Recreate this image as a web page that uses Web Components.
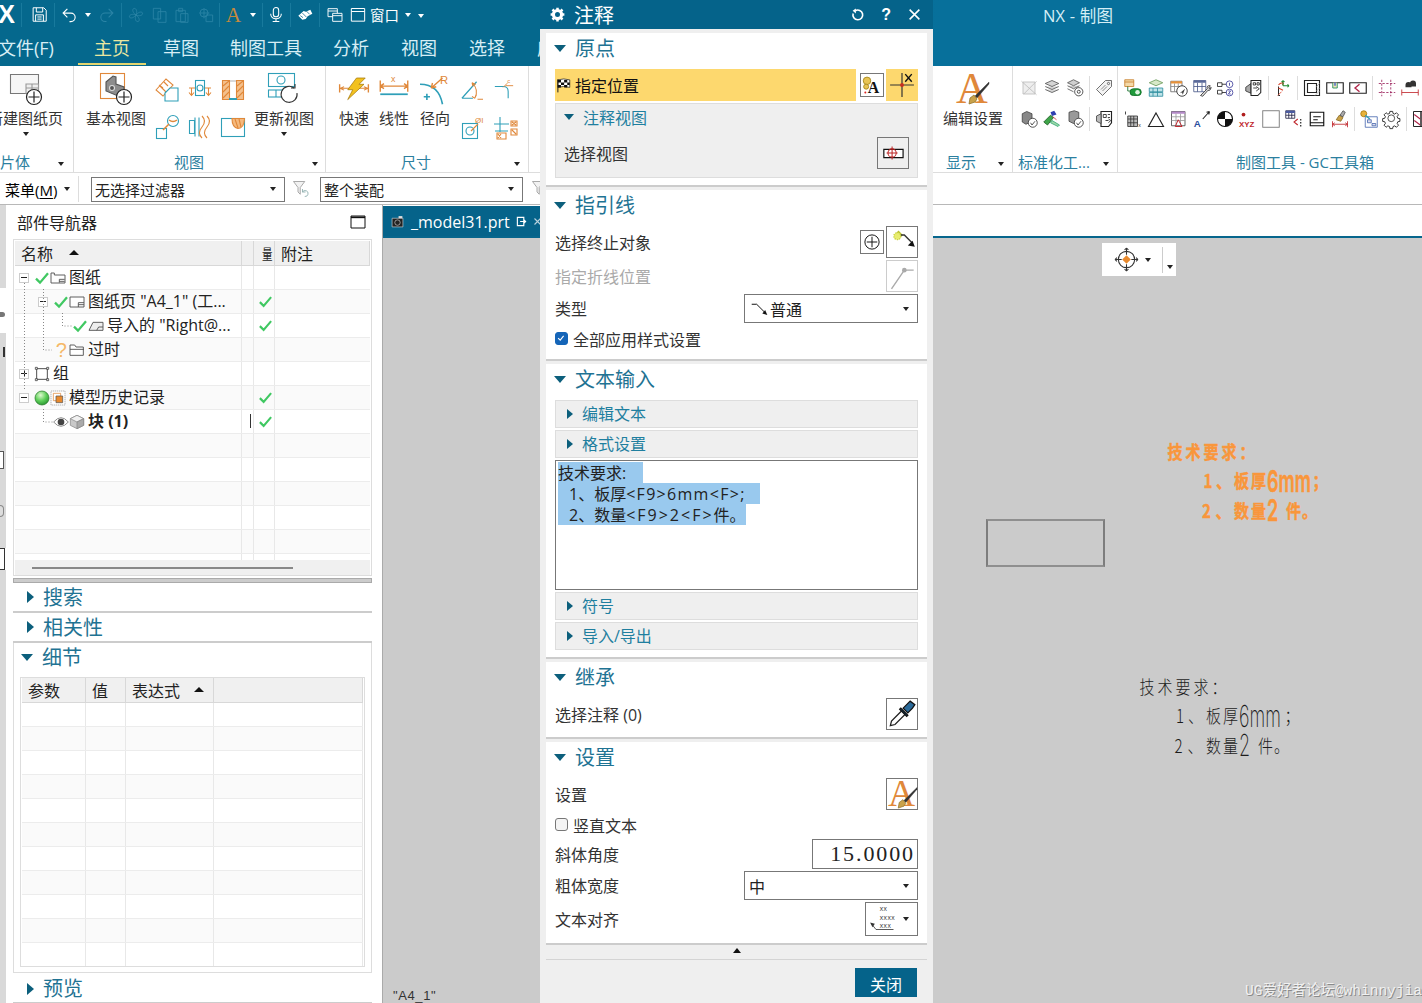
<!DOCTYPE html>
<html lang="zh"><head><meta charset="utf-8"><title>NX - 制图</title>
<style>html,body{margin:0;padding:0;background:#fff}body{width:1422px;height:1003px;overflow:hidden;font-family:"Open Sans","Noto Sans CJK SC",sans-serif}</style>
</head><body>
<nx-app></nx-app>
<script>
const O='#e0883a',T='#2f9fb8',K='#333',M='#777',F='#2b84a6',W='#fff';
const t=(x,y,s,c,fs,extra='')=>`<text x="${x}" y="${y}" fill="${c}" stroke="none" font-size="${fs}" font-family="Liberation Sans" ${extra}>${s}</text>`;
const ts=(x,y,s,c,fs,extra='')=>`<text x="${x}" y="${y}" fill="${c}" stroke="none" font-size="${fs}" font-family="Liberation Serif" ${extra}>${s}</text>`;
const tm=(x,y,s,c,fs)=>`<text x="${x}" y="${y}" fill="${c}" stroke="none" font-size="${fs}" font-family="Liberation Mono">${s}</text>`;
const plusC=(x,y,r)=>`<circle cx="${x}" cy="${y}" r="${r}" fill="#fff" stroke="#222" stroke-width="1.200"/><path stroke="#222" stroke-width="1.200" d="M${x} ${y-r+2}v${2*r-4}M${x-r+2} ${y}h${2*r-4}"/>`;
const brush=`<path d="M32 9L18 23l2 2L32 11z" fill="#333" stroke="#333" stroke-width=".4"/><path d="M13 25l4-3 3 4-2 3-6 2z" fill="#c9a24a" stroke="#8a6a20" stroke-width=".7"/>`;
const I={
save:`<g stroke="#fff" stroke-width="1.400"><path d="M3 2.500h15l3.500 3.500v15.500H3zM7.500 2.500v6h9v-6M6.500 21.500v-9h11v9M9 15.500h6M9 18.500h6"/></g>`,
undo:`<path stroke="#fff" stroke-width="1.600" d="M9 4L3 10l6 6M3 10h11a6 6 0 0 1 0 12h-2"/>`,
redo:`<path stroke="${F}" stroke-width="1.500" d="M15 4l6 6-6 6M21 10H10a6 6 0 0 0 0 12h2"/>`,
fan:`<path stroke="${F}" stroke-width="1.300" d="M12 12C8 9 5 4 9 2c4 0 5 5 3 10zM12 12c4 3 7 8 3 10-4 0-5-5-3-10zM12 12c-3 4-8 6-10 3 0-4 5-5 10-3zM12 12c3-4 8-6 10-3 0 4-5 5-10 3z"/>`,
copy:`<path stroke="${F}" stroke-width="1.300" d="M2 2h11v16H2zM9 7h12v16H9z"/>`,
paste:`<path stroke="${F}" stroke-width="1.300" d="M3 5h14v17H3zM7 2h6v5H7zM10 10h11v13H10z"/>`,
move:`<path stroke="${F}" stroke-width="1.300" d="M9 2v15M2 9h15"/><circle cx="9" cy="9" r="6" stroke="${F}" stroke-width="1.300"/><path stroke="${F}" stroke-width="1.300" d="M12 12h10v10H12z"/>`,
fontA:ts(1,22,'A','#c48a3e',30),
mic:`<rect x="8" y="1.500" width="8" height="14" rx="4" stroke="#fff" stroke-width="1.600"/><path stroke="#fff" stroke-width="1.600" d="M4 11c0 10 16 10 16 0M12 18v4M7 22.500h10"/>`,
hand:`<path fill="#fff" d="M2 13l8-7 3 1 7-3 3 6-7 4-3 4-5 1z"/><path stroke="#08668c" d="M8 9l6 6M14 6l5 5M5 13l4 3"/>`,
win1:`<path fill="#06688f" stroke="#fff" stroke-width="1.400" d="M1.500 2.500h14v12h-14zM1.500 6h14"/><path fill="#06688f" stroke="#fff" stroke-width="1.400" d="M8.500 9.500h14v12h-14zM8.500 13h14"/>`,
win2:`<path stroke="#fff" stroke-width="1.500" d="M2 3h20v19H2zM2 7.500h20"/>`,
'@newsheet':`<path fill="#f6f6f6" stroke="#777" d="M.5 1.500h28v19H.5z"/><path fill="#eee" stroke="#999" d="M16 11h12.500v9.500H16zM16 15h12.500M22 11v9.500"/>`+plusC(24,24,7.5),
'@baseview':`<rect x=".5" y=".5" width="24" height="25" stroke="${O}" fill="#fff"/><path fill="#8d8d8d" stroke="#555" d="M6 9l7-6 3 1v7l8 3v6l-6 3-12-5z"/><circle cx="12" cy="15" r="2.500" fill="#555" stroke="#ddd"/>`+plusC(24,24,7.5),
'@update':`<g stroke="${T}"><rect x=".5" y=".5" width="26" height="13"/><circle cx="13" cy="7" r="4"/><rect x=".5" y="17" width="26" height="7"/><path d="M8 17v7"/></g><path fill="#fff" stroke="#333" d="M29 20a8 8 0 1 1-3-5"/><path stroke="#333" fill="none" d="M23 15h4v-4"/>`,
v1:`<path stroke="${O}" fill="#fff" d="M1 12L11 1l7 6-10 11zM5 8l6 6M9 4l4 4M4 7l4 3"/><path stroke="${T}" fill="#fff" d="M10 15l5-5h8v13H10z"/>`,
v2:`<g stroke="${T}"><rect x="7.500" y="2.500" width="9" height="15"/><circle cx="12" cy="10" r="3"/></g><path stroke="${O}" d="M1 10h6M3.500 10v7M1 14.500l2.500 3 2.500-3M17 10h6M20.500 10v7M18 14.500l2.500 3 2.500-3"/>`,
v3:`<path fill="#f4c08c" stroke="${O}" d="M1.500 2.500h7v19h-7zM15.500 2.500h7v19h-7z"/><path stroke="${O}" d="M2 8l6-5M2 14l6-6M2 20l6-6M16 8l6-5M16 14l6-6M16 20l6-6"/><path stroke="${T}" stroke-width="2" d="M8 21h8"/><path stroke="#bbb" d="M9 3h6"/>`,
v4:`<rect x="1.500" y="13.500" width="10" height="10" stroke="${T}"/><circle cx="18" cy="6" r="5.500" stroke="${T}"/><path stroke="${O}" stroke-width="1.500" d="M8 15l6-6M14 5q4 3 8 0"/>`,
v5:`<path stroke="${T}" d="M1.500 5.500h5v13h-5zM7 2.500v19M11 2.500v19"/><path stroke="${O}" d="M14 1q5 5 0 11t0 11M19 1q5 5 0 11t0 11"/>`,
v6:`<rect x=".5" y="3.500" width="23" height="18" stroke="${T}"/><path d="M11 3.500q0 9 6 10 6 0 6.500-10z" fill="#f4b97e" stroke="${O}"/><path stroke="${O}" d="M14 4l3 9M18 4l2 8"/>`,
quick:`<g transform="translate(0 4) scale(1 .72)"><path stroke="${O}" d="M.5 7v9M23.500 7v9M1 11.500h22M1 11.500l3-2M1 11.500l3 2M23 11.500l-3-2M23 11.500l-3 2"/><path fill="#f2c11e" stroke="#a5780a" stroke-width=".7" d="M14 0h7l-5 7h4L7 24l4-11H7z"/></g>`,
linear:`<g transform="translate(0 4)"><path stroke="${O}" d="M1 2v9M23 2v9M1 6.500h22M1 6.500l3-2M1 6.500l3 2M23 6.500l-3-2M23 6.500l-3 2"/><path stroke="${T}" stroke-width="1.400" d="M1 13h22"/>`+t(9.5,3.500,'x',O,7)+`</g>`,
radial:`<path stroke="${T}" stroke-width="1.300" d="M0 9q15 0 18 16M3 19h5M5.500 16.500v5"/><path stroke="${O}" d="M9 12l9-8M9 12l1-4M9 12l4-1"/>`+t(16,9,'R',O,9),
angle:`<path stroke="${T}" stroke-width="1.300" d="M1 21h12M1 21L17 3"/><path stroke="${O}" d="M12 4q8 8 3 17M12 4l1 4M12 4l4 2M15 21l-3-2M15 21l2-4M18 22h6"/>`,
chamfer:`<path stroke="${T}" stroke-width="1.300" d="M1 9h10q6 0 6 6v8"/><path stroke="${O}" d="M11 10l5-5M14 8h9"/>`+t(16,5,'c',O,7),
hole:`<rect x="1.500" y="7.500" width="15" height="15" stroke="${T}"/><circle cx="9" cy="15" r="4" stroke="${T}"/><path stroke="${O}" d="M10 15l7-7"/>`+t(14,7,'ØI',O,8),
feat:`<path stroke="${T}" d="M6 1v15M0 8h15M1 15h13"/><path stroke="${O}" d="M17 5h6v5h-6zM3 17h9v6H3zM18 6l4 3M22 6l-4 3M4 18l3 4M7 18l-3 4M17 13h6v6h-6zM18 14l4 4"/>`,
'@editA':ts(-1,30,'A',O,44)+brush,
s1:`<path stroke="#bbb" fill="#eee" d="M4 4h16v16H4zM2 3l20 18M22 3L5 20"/>`,
s2:`<path fill="#d5d5d5" stroke="#555" d="M12 2l9 4-9 4-9-4zM3 10l9 4 9-4M3 14l9 4 9-4"/>`,
s3:`<path fill="#cfcfcf" stroke="#555" d="M10 1l8 4-8 4-8-4zM2 9l8 4 8-4M2 13l8 4"/><circle cx="17" cy="17" r="5.500" fill="#fff" stroke="#333"/><circle cx="17" cy="17" r="2" stroke="#333"/>`,
s4:`<path fill="#f3f3f3" stroke="#555" d="M14 2h8v8L10 22 2 14z"/><path stroke="#777" d="M8 14l6-6M10 16l6-6"/><circle cx="18" cy="6" r="1.500" stroke="#555"/>`,
s5:`<path fill="#888" stroke="#444" d="M3 5l6-3 7 3v10l-8 4-5-3z"/><circle cx="17" cy="17" r="6" fill="#fff" stroke="#333"/><path stroke="#333" d="M14 17l2 3 4-5"/>`,
s6:`<path fill="#3fa54a" stroke="#1d5e25" d="M1 16l9-9 4 3-8 10z"/><path fill="#2f3fb0" d="M10 3l5-2 3 5-6 2z"/><path stroke="#c34" d="M13 9l5 4"/><path fill="#9fd7a8" stroke="#3a7" d="M12 14l10 6-2 2-10-5z"/>`,
s7:`<path fill="#999" stroke="#444" d="M4 3l7-2 6 2v12l-7 3-6-3z"/><circle cx="17" cy="17" r="6" fill="#fff" stroke="#333"/><path stroke="#333" d="M14 17l2 3 4-5"/>`,
s8:`<path fill="#fff" stroke="#222" stroke-width="1.500" d="M8 2h14v15l-4 5H8z"/><path fill="#bbb" stroke="#444" d="M2 8l6-3v13l-6-3z"/><path stroke="#222" d="M11 6h4v4h-4zM17 6h3M17 10h3M14 14h4M18 12l3 2-3 3"/>`,
g1:`<path fill="#f4d9a8" stroke="#c87f2a" d="M1 1h12v9H1z"/><path stroke="#c87f2a" d="M1 4h12"/><rect x="8" y="13" width="15" height="9" rx="4.500" fill="#1f9a3b" stroke="#0c6a22"/><circle cx="18" cy="17.500" r="3" fill="#dff5e2"/><path stroke="#0c6a22" d="M5 10v6h3"/>`,
g2:`<path fill="#bfe3e8" stroke="#2f8fa0" d="M3 18h18v5H3zM3 12h18v5H3z"/><path stroke="#2f8fa0" d="M8 12v11M14 12v11"/><path fill="#d7e8c7" stroke="#6a9a5a" d="M12 1l9 4-9 4-9-4z"/>`,
g3:`<path fill="#fff" stroke="#666" d="M1 3h15v14H1z"/><path fill="#e8923a" d="M1 3h15v3H1z"/><path stroke="#888" d="M1 10h15M6 6v11M11 6v11"/><circle cx="16" cy="16" r="7" fill="#fff" stroke="#222"/><path fill="#444" d="M13 19l7-6-3 8-1-3z"/>`,
g4:`<path fill="#fff" stroke="#4a5a8a" d="M1 2h16v15H1z"/><path fill="#5a6a9a" d="M1 2h16v3H1z"/><path stroke="#4a5a8a" d="M1 10h16M6 5v12M12 5v12"/><path fill="#ddd" stroke="#333" d="M10 22l9-9c-1-3 1-5 4-4l-2 3 2 1 1-2c0 3-2 5-4 4l-7 8z"/>`,
g5:`<path stroke="#222" d="M2 5h6v5H2zM2 15h6v5H2zM8 7h6M8 18h6"/><circle cx="18" cy="7" r="4.500" stroke="#3b3b9a"/><circle cx="18" cy="18" r="4.500" stroke="#3b3b9a"/><path stroke="#3b3b9a" d="M18 5v4M16.500 16h3l-3 4h3"/>`,
g6:`<path fill="#aaa" stroke="#333" d="M1 11l7-5v13l-7-3z"/><path fill="#fff" stroke="#222" stroke-width="1.400" d="M8 2h13v16l-4 4H8z"/><path stroke="#222" d="M11 5h3v3h-3zM16 5h3v3h-3zM11 12h5M15 10l4 3-4 3"/>`,
g7:`<path stroke="#222" stroke-width="1.300" d="M6 22V10M6 22h2"/><path stroke="#d8442c" stroke-width="1.400" d="M6 8q3-4 7-2M13 6l-2-2M13 6l-2 2M6 12l6 3"/><path stroke="#1e8a2e" stroke-width="1.400" d="M12 9v-7M12 2l-2 2M12 2l2 2M12 9h8M20 9l-2-2M20 9l-2 2"/><path stroke="#d8442c" d="M5 22l5-5"/>`,
g8:`<path fill="#fff" stroke="#222" stroke-width="1.500" d="M2 2h20v20H2z"/><path fill="#fff" stroke="#222" stroke-width="1.500" d="M6 6h12v12H6z"/><path stroke="#aaa" d="M18 10l4-4M18 16l4-4M16 22l6-6"/>`,
g9:`<path stroke="#222" stroke-width="1.500" d="M1 5h22v14H1z"/><path fill="#f2e6ba" stroke="#1a8a5a" d="M9 5v7h6V5"/><path fill="#4a6aca" d="M11 5h2v4h-2z"/>`,
g10:`<path stroke="#222" stroke-width="1.500" d="M1 5h22v14H1z"/><path stroke="#b0264a" stroke-width="1.800" d="M14 7l-6 5 6 5"/>`,
g11:`<path stroke="#9a1f5a" stroke-dasharray="3 2" d="M5 1v22M17 1v22M1 6h22M1 18h22"/>`,
g12:`<path stroke="#c0272d" d="M1 14v8M23 14v8M1 18h22"/><path fill="#333" d="M6 8a4 4 0 0 1 8 0v3H6zM12 6a4 4 0 0 1 8 0v4h-8z"/>`,
h1:`<path stroke="#222" d="M2 2v4"/><path fill="#bbb" stroke="#333" d="M5 8h13v14H5z"/><path stroke="#333" d="M9 8v14M13 8v14M5 12h13M5 17h13"/>`+t(19,23,'x','#333',7),
h2:`<path stroke="#222" stroke-width="1.500" d="M12 4l10 18H2z"/>`,
h3:`<path fill="#fff" stroke="#444" d="M2 2h18v19H2z"/><path fill="#b58ac8" d="M2 2h18v3H2z"/><path stroke="#999" d="M2 9h18M2 14h18M8 5v16M14 5v16"/><path stroke="#c0272d" stroke-width="1.300" d="M11 13l5 9H7z"/>`,
h4:`<path stroke="#222" stroke-width="1.400" d="M13 12l9-10M22 2l-4 1M22 2l-1 4"/>`+t(1,23,'A','#2a4f9e',13,'font-weight="bold"'),
h5:`<circle cx="12" cy="12" r="10" fill="#fff" stroke="#111" stroke-width="1.500"/><path fill="#111" d="M12 2a10 10 0 0 0-10 10h10zM12 12h10a10 10 0 0 1-10 10z"/>`,
h6:`<circle cx="6" cy="6" r="2.500" fill="#b01e1e"/>`+t(0,22,'XYZ','#c0272d',10.5,'font-weight="bold"'),
h7:`<rect x="1" y="1" width="22" height="22" stroke="#777" stroke-width="1.200"/>`,
h8:`<path fill="#fff" stroke="#224" d="M1 1h12v10H1z"/><path fill="#4a5aa0" d="M1 1h12v3H1z"/><path stroke="#224" d="M1 7h12M5 4v7M9 4v7"/><path stroke="#c0272d" stroke-width="1.400" d="M17 12l-5 4 5 4"/><path stroke="#111" stroke-width="1.500" stroke-dasharray="2 2" d="M21 12v10"/>`,
h9:`<path stroke="#111" stroke-width="1.500" d="M3 3h18v18H3zM7 9h10M7 13h6M3 17h18"/>`,
h10:`<path stroke="#c0272d" d="M2 15v8M22 15v8M2 19h20M2 19l3-2M2 19l3 2M22 19l-3-2M22 19l-3 2"/><path fill="#c9a24a" stroke="#8a6a20" d="M7 13l4-6 5 3-3 5z"/><path fill="#aaa" stroke="#555" d="M12 7l4-6 3 2-3 6z"/>`,
h11:`<path fill="#fff" stroke="#4a6ab0" d="M7 9h16v14H7z"/><path fill="#dde" stroke="#4a6ab0" d="M10 13h5v4h-5zM16 18h5v3h-5z"/><circle cx="5" cy="5" r="4" fill="#e8b23a" stroke="#a57810"/><path stroke="#2f9fb8" stroke-width="2" d="M7 7l6 5"/>`,
h12:`<path stroke="#333" stroke-width="1.400" d="M10 2h4l.5 3 2.500 1 2.500-2 3 3-2 2.500 1 2.500 3 .5v4l-3 .5-1 2.500 2 2.500-3 3-2.500-2-2.500 1-.5 3h-4l-.5-3-2.500-1-2.500 2-3-3 2-2.500-1-2.500-3-.5v-4l3-.5 1-2.500-2-2.500 3-3 2.500 2 2.500-1z" transform="scale(.92)"/><circle cx="11" cy="11" r="4.500" stroke="#333"/>`,
h13:`<path fill="#fff" stroke="#222" stroke-width="1.300" d="M2 2h10v20H2zM12 2h10v20H12z"/><path stroke="#b0264a" stroke-width="1.500" d="M3 6l8 6M3 14l8 6M13 6l8 6M13 14l8 6"/>`,
check:`<path stroke="#40c862" stroke-width="3.400" d="M3 13l6 6L21 5"/>`,
quest:t(4,23,'?','#f5b868',30),
tr1:`<path fill="#fff" stroke="#555" stroke-width="1.400" d="M1.500 4.500h5v3h16v12h-21z"/><path stroke="#555" stroke-width="1.400" d="M14 14h8M14 17h8M14 14v5"/>`,
tr2:`<path fill="#fff" stroke="#555" stroke-width="1.400" d="M1.500 4.500h21v15h-21z"/><path stroke="#555" stroke-width="1.400" d="M14 13h8.500M14 16h8.500M14 13v6.500"/>`,
tr3:`<path fill="#eee" stroke="#555" stroke-width="1.400" d="M1.500 18.500l6-12h15v12z"/><path stroke="#555" stroke-width="1.400" d="M13 18.500l3-5h6.500"/>`,
tr4:`<path fill="#fff" stroke="#555" stroke-width="1.400" d="M1.500 20V4.500h7l2 3h11V20zM1.500 11h21"/>`,
tr5:`<path stroke="#333" stroke-width="1.300" d="M4 4h16v16H4z"/><path fill="#fff" stroke="#333" d="M2 2h3v3H2zM19 2h3v3h-3zM2 19h3v3H2zM19 19h3v3h-3z"/>`,
tr6:`<defs><radialGradient id="bg" cx=".4" cy=".3" r=".8"><stop offset="0" stop-color="#dff9d0"/><stop offset=".5" stop-color="#5fd05a"/><stop offset="1" stop-color="#1d8a28"/></radialGradient></defs><circle cx="12" cy="12" r="10.500" fill="url(#bg)" stroke="#2a7a2a"/>`,
tr7:`<path fill="#fff" stroke="#999" stroke-dasharray="2 1" d="M1.500 1.500h21v21h-21z"/><path fill="#fff" stroke="#e0883a" d="M5 5h11v11H5z"/><path fill="#e8892c" stroke="#555" d="M9 9h10v10H9z"/>`,
tr8:`<path fill="#fff" stroke="#666" d="M1 12q11-13 22 0-11 13-22 0z"/><circle cx="12" cy="12" r="5" fill="#444"/>`,
tr9:`<path fill="#c9c9c9" stroke="#888" d="M12 2l10 5v10l-10 5-10-5V7z"/><path fill="#f2f2f2" stroke="#888" d="M12 2l10 5-10 5L2 7z"/><path fill="#aaa" stroke="#888" d="M12 12l10-5v10l-10 5z"/>`,
maxi:`<path stroke="#111" stroke-width="1.500" d="M1.500 3h21v18h-21z"/><path stroke="#111" stroke-width="2.500" d="M1.500 5h21"/>`,
filt:`<path stroke="#999" fill="#f2f2f2" d="M2 2h15l-6 8v9l-3-3v-6z"/><path stroke="#8aa" d="M17 22a4 4 0 1 0-3-6M14 12v4h4"/>`,
tab:`<path fill="#222" stroke="#ddd" d="M2 6h20v16H2z"/><circle cx="12" cy="14" r="5" stroke="#ddd"/><path fill="#ddd" d="M14 2h7v4h-7z"/>`,
tabp:`<path stroke="#fff" stroke-width="2.500" d="M3 3h14v18H3zM9 12h13M16 7l5 5-5 5"/>`,
tabx:`<path stroke="#b8d2dd" stroke-width="3" d="M4 4l16 16M20 4L4 20"/>`,
snap:`<circle cx="12" cy="12" r="8.500" stroke="#333"/><path stroke="#333" d="M12 0v7M12 17v7M0 12h7M17 12h7M12 0l-2 2M12 0l2 2M12 24l-2-2M12 24l2-2M0 12l2-2M0 12l2 2M24 12l-2-2M24 12l-2 2"/><path fill="#e8892c" d="M12 7.500l4.500 4.500-4.500 4.500L7.500 12z"/>`,
gear:`<circle cx="12" cy="12" r="6.500" stroke="#fff" stroke-width="5"/><path stroke="#fff" stroke-width="4" d="M12 1v4M12 19v4M1 12h4M19 12h4M4 4l3 3M17 17l3 3M20 4l-3 3M7 17l-3 3"/>`,
reset:`<path stroke="#fff" stroke-width="3" d="M8 5a9 9 0 1 1-4 5"/><path fill="#fff" d="M9 1v9L3 5z"/>`,
close:`<path stroke="#fff" stroke-width="2.800" d="M3 3l18 18M21 3L3 21"/>`,
flag:`<path fill="#fff" stroke="#111" d="M3 3q9-3 19 0v12q-10-3-19 0z"/><path fill="#111" d="M3 3h5v4H3zM13 3h5v4h-5zM8 7h5v4H8zM18 7h4v4h-4zM3 11h5v4H3zM13 11h5v4h-5z"/><path stroke="#111" stroke-width="1.500" d="M3 2v21"/>`,
aIcon:`<circle cx="6" cy="7" r="4.500" fill="#e8c454" stroke="#a88a20"/><circle cx="5" cy="14" r="3" fill="#e8c454" stroke="#a88a20"/><circle cx="4" cy="21" r="1.200" fill="#d22"/>`+ts(7,21,'A','#111',19,'font-weight="bold"'),
cross:`<path stroke="#333" d="M1 12h22M12 1v22"/><circle cx="12" cy="12" r="1.800" fill="#c9301e"/><path stroke="#111" stroke-width="1.300" d="M15 2l6 7M21 2l-6 7"/>`,
vselect:`<path stroke="#111" stroke-width="1.300" d="M2 8h21v9H2z" fill="#fff"/><circle cx="11" cy="12" r="4.500" stroke="#b22" /><path stroke="#b22" d="M11 5v14M5 12h12"/>`,
addp:`<circle cx="12" cy="12" r="9.500" stroke="#111" stroke-width="1.300"/><path stroke="#111" stroke-width="1.300" d="M12 5v14M5 12h14"/>`,
term:`<path d="M9 3l-3 3 3 3 3-3z" fill="#d8e04a" stroke="#b8c030"/><circle cx="8" cy="7" r="3" fill="#e8ec70" stroke="#c8d040" stroke-dasharray="1 1"/><path stroke="#333" stroke-width="1.200" d="M11 6h3l7 7"/><path fill="#111" d="M23 16l-6-1 4-4z"/>`,
kink:`<circle cx="14" cy="7" r="2" fill="#aaa"/><path stroke="#aaa" stroke-width="1.200" d="M3 23L14 7h8"/>`,
leader:`<path stroke="#111" stroke-width="1.400" d="M1 6h7l11 11"/><path fill="#111" d="M23 21l-7-2 4-5z"/>`,
drop:`<path fill="#fff" stroke="#222" d="M2 22l1-4 9-9 3 3-9 9z"/><path fill="#2a6a9a" stroke="#111" d="M13 7l3-3 3-3 4 3-2 3-4 4z"/><path fill="#0f3a5a" stroke="#111" d="M11 7l6 6-1 1-6-6z"/>`,
'@styleA':ts(1,29,'A',O,40)+brush,
align:tm(9,5.500,'xx',K,5.5)+tm(9,12.500,'xxxx',K,5.5)+tm(9,19.500,'xxx',K,5.5)+`<path stroke="#333" stroke-width=".7" d="M2 16l4 5h15"/><path fill="#333" d="M1 15l4 1-2 3z"/>`
};
const ic=(n,w=18,h=w,st='')=>`<nx-icon n="${n}" w="${w}" h="${h}" style="${st}"></nx-icon>`;
const FONT=`:host{font-family:"Open Sans","Noto Sans CJK SC",sans-serif}*{box-sizing:border-box}`;
function def(name,css,html){customElements.define(name,class extends HTMLElement{connectedCallback(){if(this.shadowRoot)return;const r=this.attachShadow({mode:'open'});r.innerHTML='<style>'+FONT+css+'</style>'+(typeof html==='function'?html(this):html)}})}
def('nx-icon',':host{display:inline-flex;flex:none;line-height:0}svg{display:block;overflow:visible}',e=>{const n=e.getAttribute('n'),big=I['@'+n];return `<svg xmlns="http://www.w3.org/2000/svg" width="${e.getAttribute('w')}" height="${e.getAttribute('h')}" viewBox="0 0 ${big?'32 32':'24 24'}" fill="none" stroke-width="1.100">${big||I[n]}</svg>`});
def('nx-caret',':host{display:inline-block;flex:none;width:0;height:0;border-left:3.500px solid transparent;border-right:3.500px solid transparent;border-top:4px solid var(--c,#222)}','');
def('nx-tri',':host{display:inline-block;flex:none;width:0;height:0}',e=>{const w=+e.getAttribute('w'),h=+e.getAttribute('h'),d=e.getAttribute('d');e.style.cssText=d==='r'?`border-left:${w}px solid #0c5f7c;border-top:${h/2}px solid transparent;border-bottom:${h/2}px solid transparent`:`border-top:${h}px solid #0c5f7c;border-left:${w/2}px solid transparent;border-right:${w/2}px solid transparent`;return ''});
def('nx-sep',':host{display:block;flex:none;width:1px;height:24px;background:var(--sc,#ddd)}','');

/* title bar */
def('nx-titlebar',`:host{display:flex;align-items:center;height:29px;background:linear-gradient(90deg,#05688d 0,#05688d 540px,#07709b 940px);color:#fff;position:relative;overflow:hidden;--sc:#187a9d;--c:#fff}
.x{font:bold 25px/29px "Liberation Sans";width:15px;margin-right:6px;overflow:hidden;flex:none;direction:rtl}
.win{font-size:14.500px;width:30px;flex:none;margin-left:4px;white-space:nowrap}
.nx{position:absolute;left:1043px;top:0;line-height:32px;font-size:16.500px;color:#d5eef5;letter-spacing:.2px}`,
`<span class="x">X</span><nx-sep></nx-sep>${ic('save',17,17,'margin-left:9px')}<nx-sep style="margin-left:6px"></nx-sep>${ic('undo',17,17,'margin-left:6px')}<nx-caret style="margin-left:7px"></nx-caret>${ic('redo',17,17,'margin-left:7px')}<nx-sep style="margin-left:6px"></nx-sep>${ic('fan',16,16,'margin-left:6px')}${ic('copy',16,16,'margin-left:8px')}${ic('paste',16,16,'margin-left:6px')}${ic('move',16,16,'margin-left:8px')}<nx-sep style="margin-left:5px"></nx-sep>${ic('fontA',17,20,'margin-left:5px')}<nx-caret style="margin-left:8px"></nx-caret><nx-sep style="margin-left:6px"></nx-sep>${ic('mic',16,17,'margin-left:5px')}<nx-sep style="margin-left:6px"></nx-sep>${ic('hand',16,16,'margin-left:6px')}<nx-sep style="margin-left:6px"></nx-sep>${ic('win1',16,16,'margin-left:7px')}${ic('win2',16,17,'margin-left:7px')}<span class="win">窗口</span><nx-caret style="margin-left:5px"></nx-caret><nx-caret style="margin-left:7px;margin-top:3px"></nx-caret><span class="nx">NX - 制图</span>`);

/* tabs */
def('nx-tabs',`:host{display:flex;height:37px;background:linear-gradient(90deg,#05688d 0,#05688d 540px,#07709b 940px);overflow:hidden}
span{flex:none;font-size:18px;line-height:38px;color:#d7eef5;white-space:nowrap;position:relative}
.a{color:#e9e7a0;padding:0 16px;margin:0 17px 0 0;height:36px;box-shadow:inset 0 -2px #e3d56f}
.f{margin-left:-2px;width:80px}`,
`<span class="f">文件(F)</span><span class="a">主页</span><span>草图</span><span style="margin-left:31px">制图工具</span><span style="margin-left:31px">分析</span><span style="margin-left:32px">视图</span><span style="margin-left:32px">选择</span><span style="margin-left:32px">应用</span>`);

/* ribbon */
def('nx-rgroup',`:host{display:flex;flex-direction:column;flex:none;height:107px;position:relative;border-right:1px solid #ddd;--c:#222}
.body{height:83px;display:flex}
.lab{flex:1;display:flex;align-items:flex-start;font-size:15px;line-height:20px;color:#2c7f9f;white-space:nowrap;padding-top:2px;margin-top:1px;height:20px}
nx-caret{margin:10px 0 0 auto}`,
e=>`<div class="body"><slot></slot></div><div class="lab" style="padding-left:${e.getAttribute('lp')}px;padding-right:${e.getAttribute('cp')}px"><span>${e.getAttribute('label')}</span>${e.hasAttribute('nocaret')?'':'<nx-caret></nx-caret>'}</div>`);
def('nx-big',`:host{display:flex;flex-direction:column;align-items:center;flex:none;padding-top:7px;font-size:15px;color:#333;--c:#222}
.i{height:33px}
span{line-height:20px;margin-top:2px;white-space:nowrap}
nx-caret{margin-top:4px}`,
e=>`<div class="i">${ic(e.getAttribute('icon'),e.getAttribute('s')||32)}</div><span>${e.getAttribute('text')}</span>${e.hasAttribute('caret')?'<nx-caret></nx-caret>':''}`);
def('nx-irow',`:host{display:flex;align-items:center;gap:var(--g,5px);height:18px}`,'<slot></slot>');
def('nx-ribbon',`:host{display:flex;height:107px;background:#fff;overflow:hidden;border-bottom:1px solid #ddd}
.v{display:grid;grid-template-columns:24px 24px 24px;column-gap:9px;row-gap:13px;padding-top:12px;height:83px;align-content:start;justify-items:center;margin-left:9px}
.col{display:flex;flex-direction:column;gap:13px;padding-top:13px}
.sm{display:grid;grid-template-columns:23px 23px;column-gap:10px;row-gap:15px;padding:13px 0 0 11px;align-content:start}`,
`<nx-rgroup style="width:74px" label="片体" lp="0" cp="9"><nx-big icon="newsheet" text="新建图纸页" caret style="margin-left:-12px"></nx-big></nx-rgroup>
<nx-rgroup style="width:252px" label="视图" lp="100" cp="7">
<nx-big icon="baseview" text="基本视图" style="margin-left:12px"></nx-big>
<div class="v">${['v1','v2','v3','v4','v5','v6'].map(n=>ic(n,24)).join('')}</div>
<nx-big icon="update" text="更新视图" caret style="margin-left:9px"></nx-big></nx-rgroup>
<nx-rgroup style="width:203px" label="尺寸" lp="75" cp="8">
<nx-big icon="quick" text="快速" s="30" style="margin-left:13px"></nx-big><nx-big icon="linear" text="线性" s="30" style="margin-left:10px"></nx-big><nx-big icon="radial" text="径向" s="30" style="margin-left:11px"></nx-big>
<div class="sm">${ic('angle',22)}${ic('chamfer',20)}${ic('hole',24)}${ic('feat',24)}</div></nx-rgroup>
<div style="width:405px;flex:none"></div>
<nx-rgroup style="width:79px;margin-left:0" label="显示" lp="12" cp="8"><nx-big icon="editA" text="编辑设置" style="margin-left:9px"></nx-big></nx-rgroup>
<nx-rgroup style="width:105px" label="标准化工..." lp="5" cp="8"><div class="col" style="padding-left:7px">
<nx-irow>${ic('s1')}${ic('s2')}${ic('s3')}<nx-sep></nx-sep>${ic('s4')}</nx-irow>
<nx-irow>${ic('s5')}${ic('s6')}${ic('s7')}<nx-sep></nx-sep>${ic('s8')}</nx-irow></div></nx-rgroup>
<nx-rgroup style="width:305px;border:0" label="制图工具 - GC工具箱" lp="118" cp="0" nocaret><div class="col" style="padding-left:6px">
<nx-irow>${ic('g1')}${ic('g2')}${ic('g3')}${ic('g4')}${ic('g5')}<nx-sep></nx-sep>${ic('g6')}<nx-sep></nx-sep>${ic('g7')}<nx-sep></nx-sep>${ic('g8')}${ic('g9')}${ic('g10')}<nx-sep></nx-sep>${ic('g11')}${ic('g12')}</nx-irow>
<nx-irow>${ic('h1')}${ic('h2')}${ic('h3')}${ic('h4')}${ic('h5')}${ic('h6')}${ic('h7')}${ic('h8')}${ic('h9')}${ic('h10')}<nx-sep></nx-sep>${ic('h11')}${ic('h12')}<nx-sep></nx-sep>${ic('h13')}</nx-irow></div></nx-rgroup>`);

/* select */
def('nx-select',`:host{display:flex;align-items:center;flex:none;border:1px solid #777;background:#fff;padding:0 8px 0 var(--pl,3px);font-size:16px;color:#222;--c:#222;white-space:nowrap}
.g{flex:1;display:flex;align-items:center;min-width:0}`,`<div class="g"><slot></slot></div><nx-caret></nx-caret>`);

/* selection bar */
def('nx-selbar',`:host{display:flex;align-items:center;height:32px;background:#fff;border-bottom:1px solid #b8b8b8;--c:#222;padding-top:1px;overflow:hidden}
.m{margin-left:5px;font-size:15px;width:54px;flex:none;white-space:nowrap}u{text-underline-offset:2px}`,
`<span class="m">菜单(<u>M</u>)</span><nx-caret style="margin-left:5px"></nx-caret><nx-sep style="margin-left:8px;height:26px"></nx-sep>
<nx-select style="width:194px;height:25px;margin-left:12px;font-size:15px">无选择过滤器</nx-select>${ic('filt',18,18,'margin-left:7px')}
<nx-select style="width:203px;height:25px;margin-left:10px;font-size:15px">整个装配</nx-select>${ic('filt',18,18,'margin-left:8px')}`);

/* left dock strip */
def('nx-dock',`:host{display:flex;flex-direction:column;width:7px;flex:none;background:#fff;overflow:hidden}
div{width:6px;background:#d9d9d9;flex:none;position:relative}
i{display:block;background:#666;width:5px;position:absolute;left:0}`,
`<div style="height:83px"></div><div style="height:45px;background:#fff"><i style="top:24px;height:5px;background:#777;border-radius:0 3px 3px 0"></i></div><div style="height:42px"><i style="top:14px;height:10px;width:1.500px;left:3px;background:#333"></i></div><div style="height:70px"></div><div style="height:50px"><i style="top:6px;height:18px;width:4px;background:#fff;border:1px solid #555;border-left:0"></i></div><div style="height:53px"><i style="top:10px;height:12px;width:4px;background:#ddd;border:1px solid #888;border-left:0;border-radius:0 6px 6px 0"></i></div><div style="height:22px;background:#fff;border:1px solid #333;border-left:0;width:5px"></div><div style="flex:1"></div>`);

/* tree */
def('nx-row',`:host{display:grid;grid-template-columns:227px 12px 21px 1fr;height:24px;border-bottom:1px solid #ececec;background:var(--bg,#fff);font-size:16px;color:#222}
.n{display:flex;align-items:center;white-space:nowrap;overflow:hidden;border-right:1px solid #e8e8e8;position:relative}
.b{border-right:1px solid #e8e8e8;position:relative}
.c{border-right:1px solid #e8e8e8;display:flex;align-items:center;justify-content:center;padding-left:3px}
.x{width:10px;height:10px;border:1px solid #ccc;background:#fff;flex:none;position:relative;margin-right:5px}
.x::before{content:"";position:absolute;left:1px;right:1px;top:3.500px;height:1px;background:#222}
.x.p::after{content:"";position:absolute;top:1px;bottom:1px;left:3.500px;width:1px;background:#222}
.t{margin-left:3px;padding-bottom:4px}
.bold{font-weight:700}
.bar{position:absolute;left:8px;top:4px;height:14px;width:1px;background:#333}`,
e=>{const g=n=>e.getAttribute(n);return `<div class="n" style="padding-left:${g('ind')}px">${g('x')?`<span class="x ${g('x')==='+'?'p':''}"></span>`:''}${g('s')?ic(g('s'),16):''}${g('i')?ic(g('i'),16):''}<span class="t ${e.hasAttribute('bold')?'bold':''}">${g('text')||''}</span></div><div class="b">${e.hasAttribute('bold')?'<span class="bar"></span>':''}</div><div class="c">${e.hasAttribute('ok')?ic('check',15):''}</div><div></div>`});
def('nx-th',`:host{display:grid;height:25px;background:#f0f0f0;border-bottom:1px solid #d8d8d8;font-size:16px;color:#222}
span{display:flex;align-items:center;border-right:1px solid #d8d8d8;padding-left:var(--thp,6px);white-space:nowrap;padding-bottom:1px;overflow:hidden}
small{display:inline-block;font-size:14px;transform:scaleX(.75);transform-origin:0 50%;margin-left:2px}
b{width:0;height:0;border:5px solid transparent;border-top:0;border-bottom:5px solid #111;display:inline-block}`,
e=>{e.style.gridTemplateColumns=e.getAttribute('c');return e.getAttribute('cells').split('|').map(x=>{const[a,m]=x.split('^');return `<span>${a}${m?`<b style="margin-left:${m}px"></b>`:''}</span>`}).join('')});
def('nx-zrow',`:host{display:grid;height:24px;border-bottom:1px solid #ececec;background:var(--bg,#fff)}
span{border-right:1px solid #e8e8e8}`,e=>{e.style.gridTemplateColumns=e.getAttribute('c');return '<span></span>'.repeat(e.getAttribute('c').split(' ').length)});
def('nx-head',`:host{display:flex;align-items:center;font-size:20px;color:#1f7393;height:30px;flex:none;gap:9px;padding-left:var(--hp,8px);white-space:nowrap}
span{padding-bottom:2px}`,
e=>{const o=e.hasAttribute('open');return `<nx-tri d="${o?'d':'r'}" w="${o?13:7}" h="${o?7:12}"></nx-tri><span><slot></slot></span>`});

def('nx-nav',`:host{display:flex;flex-direction:column;width:376px;flex:none;background:#fff;padding-left:6px;border-right:1px solid #aaa;overflow:hidden}
.top{display:flex;align-items:center;justify-content:space-between;height:34px;flex:none;font-size:16px;color:#222;padding:0 6px 1px 4px;width:359px}
.tbl{width:359px;height:337px;flex:none;border:1px solid #ddd;padding:1px;position:relative;overflow:hidden}
.tbody{height:294px;overflow:hidden;position:relative}
.scroll{height:17px;background:#f0f0f0;padding:7px 0 0 17px}.scroll i{display:block;width:261px;height:2px;background:#888}
.lines{position:absolute;left:0;top:0;pointer-events:none}
.split{width:359px;height:5px;background:#ccc;border:1px solid #aaa;flex:none;margin-top:2px}
.sec{width:359px;flex:none;--hp:14px}
.sec nx-head{height:28px;}
.sep{width:359px;height:2px;background:#ccc;flex:none}
.det{width:359px;height:330px;flex:none;border:1px solid #ddd;border-top:0;--hp:7px}
.inner{margin:6px 6px 0 6px;height:290px;border:1px solid #ddd;padding:0 1px;overflow:hidden}`,
()=>{const C='64px 40px 88px 1fr';let z='';for(let i=0;i<11;i++)z+=`<nx-zrow c="${C}" style="--bg:${i%2?'#fafafa':'#fff'}"></nx-zrow>`;
let em='';for(let i=0;i<6;i++)em+=`<nx-row ind="0" style="--bg:${i%2?'#fff':'#fafafa'}"></nx-row>`;
return `<div class="top"><span>部件导航器</span>${ic('maxi',16,16)}</div>
<div class="tbl"><nx-th c="227px 12px 21px 1fr" cells="名称^16|<i></i>|<small>量</small>|附注" style="height:25px"></nx-th>
<div class="tbody">
<nx-row ind="4" x="-" s="check" i="tr1" text="图纸"></nx-row>
<nx-row ind="23" x="-" s="check" i="tr2" text='图纸页 "A4_1" (工...' ok style="--bg:#fafafa"></nx-row>
<nx-row ind="57" s="check" i="tr3" text='导入的 "Right@...' ok></nx-row>
<nx-row ind="38" s="quest" i="tr4" text="过时" style="--bg:#fafafa"></nx-row>
<nx-row ind="4" x="+" i="tr5" text="组"></nx-row>
<nx-row ind="4" x="-" s="tr6" i="tr7" text="模型历史记录" ok style="--bg:#fafafa"></nx-row>
<nx-row ind="38" s="tr8" i="tr9" text="块 (1)" bold ok></nx-row>${em}
<svg class="lines" width="120" height="170" fill="none" stroke="#888" stroke-dasharray="1 2"><path d="M9.500 17V125M28.500 23V84H37M47.500 47V60H57M28.500 143V156H38"/></svg>
</div><div class="scroll"><i></i></div></div>
<div class="split"></div>
<div class="sec"><nx-head>搜索</nx-head></div><div class="sep"></div>
<div class="sec"><nx-head>相关性</nx-head></div><div class="sep"></div>
<div class="sec det"><nx-head open>细节</nx-head><div class="inner"><nx-th c="${C}" cells="参数|值|表达式^14|<i></i>"></nx-th>${z}</div></div>
<div class="sec" style="margin-top:2px"><nx-head style="height:27px">预览</nx-head></div><div class="sep"></div>`});

/* drawing */
def('nx-note',`:host{position:absolute;display:block;transform:scaleY(1.220);transform-origin:0 0;white-space:nowrap;color:var(--nc);font-size:15px;font-weight:var(--nw);-webkit-text-stroke:var(--ns,0) var(--nc);font-family:"Noto Sans CJK SC",sans-serif}
.l{display:flex;align-items:flex-end;height:24px;line-height:24px}
.l span{display:inline-block;flex:none;text-align:center}
.l .b{display:inline-block;flex:none;font-family:"Inter","Liberation Sans";font-weight:var(--lw);font-size:25px;line-height:24px;transform:scaleX(.72);transform-origin:0 50%;text-align:left}`,
()=>{const c=(s,w=18)=>`<span style="width:${w}px">${s}</span>`;return `<div class="l">${c('技')}${c('术')}${c('要')}${c('求')}${c('：')}</div>
<div class="l" style="padding-left:36px">${c('1',12)}${c('、',19)}${c('板',17)}${c('厚',17)}<span class="b" style="width:44px;">6mm</span>${c('；',18)}</div>
<div class="l" style="padding-left:34px">${c('2',13)}${c('、',20)}${c('数',17)}${c('量',17)}<span class="b" style="width:18px">2</span>${c('件',17)}${c('。',14)}</div>`});
def('nx-snap',`:host{position:absolute;left:719px;top:5px;width:74px;height:33px;background:#fff;display:flex;align-items:center;padding-left:13px;--c:#222;--sc:#ccc}`,
`${ic('snap',23)}<nx-caret style="margin-left:7px"></nx-caret><nx-sep style="margin-left:11px;height:26px"></nx-sep><nx-caret style="margin:14px 0 0 4px"></nx-caret>`);
def('nx-graphics',`:host{flex:1;display:flex;flex-direction:column;min-width:0;background:#cbcbcb}
.strip{height:33px;flex:none;background:#fff;border-bottom:2px solid #07668d;display:flex}
.tab{width:160px;flex:none;background:#05638a;color:#fff;display:flex;align-items:center;font-size:16px;padding:1px 0 0 8px;margin-top:1px;white-space:nowrap}
.cv{flex:1;position:relative;overflow:hidden}
.rect{position:absolute;left:603px;top:281px;width:119px;height:48px;border:2px solid #8f8f8f;border-left-color:#7d7d7d;border-right-color:#7d7d7d}
.a4{position:absolute;left:10px;top:750px;font:13px/16px "Liberation Sans";color:#333;letter-spacing:.6px}
.wm{position:absolute;left:862px;top:744px;font:14.500px/18px "Liberation Mono","Noto Sans CJK SC",monospace;color:#f1f1f1;text-shadow:1px 1px 0 #8a8a8a;white-space:nowrap}`,
`<div class="strip"><div class="tab">${ic('tab',13,13)}<span style="margin-left:7px">_model31.prt</span>${ic('tabp',11,11,'margin-left:6px')}${ic('tabx',9,9,'margin-left:6px')}</div></div>
<div class="cv"><nx-snap></nx-snap><div class="rect"></div>
<nx-note style="left:783px;top:199px;--nc:#f9963b;--nw:700;--lw:600;--ns:.4px"></nx-note>
<nx-note style="left:755px;top:434px;--nc:#1c1c1c;--nw:300;--lw:200"></nx-note>
<span class="a4">"A4_1"</span><span class="wm">UG爱好者论坛@whinnyjia</span></div>`);

/* dialog parts */
def('nx-field',`:host{display:flex;align-items:center;font-size:16px;color:#333;white-space:nowrap;flex:none}
.l{flex:1;padding-bottom:1px}`,`<div class="l"><slot name="l"></slot></div><slot></slot>`);
def('nx-btn',`:host{display:flex;align-items:center;justify-content:center;flex:none;background:#fff;border:1px solid #777}`,
e=>ic(e.getAttribute('i'),e.getAttribute('s')||24));
def('nx-check',`:host{display:flex;align-items:center;height:100%;font-size:16px;color:#333;gap:5px;white-space:nowrap}
.k{width:13px;height:13px;border-radius:3px;background:#f4f4f4;border:1px solid #777;flex:none;display:flex}
.k.on{background:#1565b8;border-color:#1565b8}`,
e=>`<span class="k ${e.hasAttribute('on')?'on':''}">${e.hasAttribute('on')?'<svg viewBox="0 0 13 13" width="11" height="11" fill="none" stroke="#fff" stroke-width="1.300"><path d="M2.500 6l2.500 2.500 4-5"/></svg>':''}</span><span><slot></slot></span>`);
def('nx-sub',`:host{display:flex;align-items:center;height:28px;background:#efefef;border:1px solid #ddd;font-size:16px;color:#1f7f9f;gap:9px;padding-left:11px;flex:none}
span{padding-bottom:2px}`,
`<nx-tri d="r" w="6" h="10"></nx-tri><span><slot></slot></span>`);
def('nx-panel',`:host{display:flex;flex-direction:column;background:#efefef;border:1px solid #ddd;height:75px;flex:none;padding:0 8px}
.h{display:flex;align-items:center;gap:9px;height:25px;color:#1f7f9f;font-size:16px;flex:none}
.r{display:flex;align-items:center;justify-content:space-between;flex:1;font-size:16px;color:#333}`,
`<div class="h"><nx-tri d="d" w="10" h="6"></nx-tri><span>注释视图</span></div><div class="r"><span>选择视图</span><nx-btn i="vselect" s="22" style="width:32px;height:32px;background:#efefef"></nx-btn></div>`);
def('nx-section',`:host{display:flex;flex-direction:column;background:#fff;border-bottom:2px solid #ccc;flex:none;padding:0 9px 6px}
.b{display:flex;flex-direction:column;gap:2px;margin-top:6px}
nx-head{--hp:0px}`,
e=>`<nx-head open style="margin-left:-1px">${e.getAttribute('title')}</nx-head><div class="b"><slot></slot></div>`);
def('nx-textarea',`:host{display:block;height:130px;flex:none;border:1px solid #777;background:#fff;padding:1px 2px;font-size:16px;color:#222;white-space:pre;font-family:"Open Sans","Noto Sans CJK SC",sans-serif}
div{height:21px;line-height:23px;background:#99c9ee;overflow:hidden}
span{letter-spacing:1.300px}
.w{letter-spacing:2px}
.n{display:inline-block;width:11px}`,
`<div style="width:85px">技术要求:</div><div style="width:202px"><i class="n"></i>1、板厚<span>&lt;F9&gt;6mm&lt;F&gt;;</span></div><div style="width:188px"><i class="n"></i>2、数量<span class="w">&lt;F9&gt;2&lt;F&gt;</span>件。</div>`);
def('nx-dialog',`:host{position:absolute;left:540px;top:0;width:393px;height:1003px;background:#efefef;display:flex;flex-direction:column;z-index:5}
.tb{height:29px;background:#05638a;color:#fff;display:flex;align-items:center;padding-left:10px;flex:none}
.tb b{font-weight:400;font-size:20px;margin-left:9px;flex:1}
.body{padding:4px 6px 0;display:flex;flex-direction:column;gap:3px;flex:none}
.exp{height:18px;margin:0 6px;border-bottom:1px solid #d4d4d4;display:flex;justify-content:center;align-items:center;margin-top:-3px;flex:none}
.exp i{width:0;height:0;border:4.500px solid transparent;border-top:0;border-bottom:5px solid #111}
.foot{display:flex;justify-content:flex-end;padding:8px 16px 0 0}
.close{width:62px;height:29px;background:#05638a;color:#fff;font-size:16px;display:flex;align-items:center;justify-content:center;padding-top:3px}
.y{background:#fdd86e;height:32px;display:flex;align-items:center;padding-left:1px;gap:4px;flex:1;font-size:16px;color:#111;margin-right:4px}
.y span{padding-bottom:1px}
.rowy{display:flex;align-items:center;height:32px;flex:none}
.yb{width:32px;height:32px;background:#fdd86e;display:flex;align-items:center;justify-content:center;margin-left:2px}
.sp{display:flex;gap:2px;align-items:center}
.tv{font:22px/28px "Liberation Serif";letter-spacing:1.900px;color:#222;text-align:right;width:106px;height:30px;border:1px solid #777;padding-right:2px;background:#fff}`,
`<div class="tb">${ic('gear',15,15)}<b>注释</b>${ic('reset',13,13,'margin-right:17px')}<span style="font:bold 16px 'Liberation Sans';margin-right:17px">?</span>${ic('close',13,13,'margin-right:12px')}</div>
<div class="body">
<nx-section title="原点" style="height:154px"><div class="rowy"><div class="y">${ic('flag',15,15)}<span>指定位置</span></div><nx-btn i="aIcon" s="20" style="width:24px;height:24px"></nx-btn><div class="yb">${ic('cross',26,26)}</div></div><nx-panel></nx-panel></nx-section>
<nx-section title="指引线" style="height:171px">
<nx-field style="height:32px"><span slot="l">选择终止对象</span><div class="sp"><nx-btn i="addp" s="18" style="width:24px;height:24px"></nx-btn><nx-btn i="term" s="28" style="width:32px;height:32px"></nx-btn></div></nx-field>
<nx-field style="height:32px"><span slot="l" style="color:#aaa">指定折线位置</span><nx-btn i="kink" s="28" style="width:32px;height:32px;border-color:#ccc"></nx-btn></nx-field>
<nx-field style="height:29px"><span slot="l">类型</span><nx-select style="width:174px;height:29px;--pl:6px">${ic('leader',17,17,'margin-right:2px')}普通</nx-select></nx-field>
<nx-check on style="height:27px">全部应用样式设置</nx-check></nx-section>
<nx-section title="文本输入" style="height:295px"><nx-sub>编辑文本</nx-sub><nx-sub>格式设置</nx-sub><nx-textarea></nx-textarea><nx-sub>符号</nx-sub><nx-sub>导入/导出</nx-sub></nx-section>
<nx-section title="继承" style="height:77px"><nx-field style="height:32px"><span slot="l">选择注释 (0)</span><nx-btn i="drop" s="28" style="width:32px;height:32px"></nx-btn></nx-field></nx-section>
<nx-section title="设置" style="height:203px"><nx-field style="height:32px"><span slot="l">设置</span><nx-btn i="styleA" s="30" style="width:32px;height:32px"></nx-btn></nx-field>
<nx-check style="height:25px">竖直文本</nx-check>
<nx-field style="height:30px"><span slot="l">斜体角度</span><div class="tv">15.0000</div></nx-field>
<nx-field style="height:29px"><span slot="l">粗体宽度</span><nx-select style="width:174px;height:29px;--pl:4px">中</nx-select></nx-field>
<nx-field style="height:34px"><span slot="l">文本对齐</span><nx-select style="width:53px;height:34px;--pl:3px">${ic('align',28,28)}</nx-select></nx-field></nx-section>
</div><div class="exp"><i></i></div>
<div class="foot"><div class="close">关闭</div></div>`);

def('nx-app',`:host{display:block;position:relative;width:1422px;height:1003px;overflow:hidden;background:#fff}
.w{display:flex;height:798px}`,
`<nx-titlebar></nx-titlebar><nx-tabs></nx-tabs><nx-ribbon></nx-ribbon><nx-selbar></nx-selbar>
<div class="w"><nx-dock></nx-dock><nx-nav></nx-nav><nx-graphics></nx-graphics></div><nx-dialog></nx-dialog>`);
</script>
</body></html>
